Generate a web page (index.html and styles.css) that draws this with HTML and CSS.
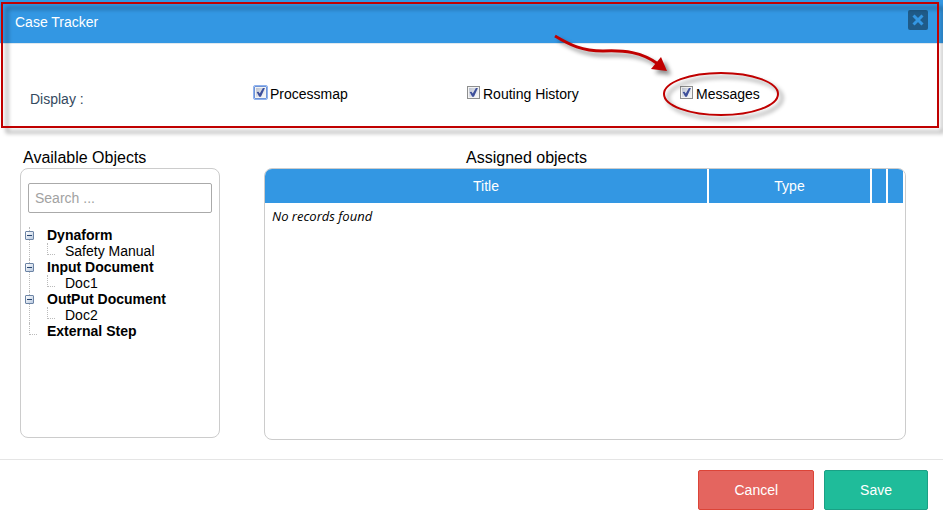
FILE: index.html
```html
<!DOCTYPE html>
<html lang="en">
<head>
<meta charset="utf-8">
<title>Case Tracker</title>
<link rel="stylesheet" href="styles.css">
</head>
<body>
<main class="dialog">
  <div class="top">
    <header class="titlebar">
      <h1>Case Tracker</h1>
      <button class="close" type="button" aria-label="Close">
        <svg viewBox="0 0 20 20" width="20" height="20"><path d="M5.5 5.5l9 9M14.5 5.5l-9 9" stroke="#3397e3" stroke-width="3"/></svg>
      </button>
    </header>
    <div class="display" role="group" aria-labelledby="display-label">
      <span id="display-label" class="display-label">Display :</span>
      <div class="option"><input class="focused" type="checkbox" id="processmap" checked><label for="processmap">Processmap</label></div>
      <div class="option"><input type="checkbox" id="routing" checked><label for="routing">Routing History</label></div>
      <div class="option">
        <input type="checkbox" id="messages" checked><label for="messages">Messages</label>
        <svg class="callout" viewBox="0 0 260 100" width="260" height="100" aria-hidden="true">
          <ellipse cx="171" cy="64" rx="57" ry="21" fill="none" stroke="#c00000" stroke-width="2"/>
          <path d="M5 6C20 15 32 21 53 21C74 20 92 22 108 34" fill="none" stroke="#c00000" stroke-width="3"/>
          <path d="M117 41L101 39L111 27Z" fill="#c00000"/>
        </svg>
      </div>
    </div>
    <div class="highlight" aria-hidden="true"></div>
  </div>
  <div class="content">
    <section class="available">
      <h2>Available Objects</h2>
      <div class="panel tree-panel">
        <input class="search" type="text" placeholder="Search ..." aria-label="Search objects">
        <ul class="tree">
          <li><button class="toggle" type="button" aria-label="Collapse Dynaform"></button><b>Dynaform</b>
            <ul><li>Safety Manual</li></ul></li>
          <li><button class="toggle" type="button" aria-label="Collapse Input Document"></button><b>Input Document</b>
            <ul><li>Doc1</li></ul></li>
          <li><button class="toggle" type="button" aria-label="Collapse OutPut Document"></button><b>OutPut Document</b>
            <ul><li>Doc2</li></ul></li>
          <li><b>External Step</b></li>
        </ul>
      </div>
    </section>
    <section class="assigned">
      <h2>Assigned objects</h2>
      <div class="panel table-panel">
        <table>
          <thead><tr><th>Title</th><th class="type">Type</th><th class="action"></th><th class="action last"></th></tr></thead>
          <tbody><tr><td colspan="4">No records found</td></tr></tbody>
        </table>
      </div>
    </section>
  </div>
  <footer class="footer">
    <button class="btn cancel" type="button">Cancel</button>
    <button class="btn save" type="button">Save</button>
  </footer>
</main>
</body>
</html>
```
FILE: styles.css
```css
* { box-sizing: border-box; }
body {
  margin: 0;
  background: #fff;
  color: #000;
  font: 14px/16px "Liberation Sans", Arial, sans-serif;
}
h1, h2 { margin: 0; font-weight: normal; }
button, input { font: inherit; }

.top { position: relative; height: 129px; }
.titlebar {
  display: flex;
  align-items: flex-start;
  justify-content: space-between;
  height: 44px;
  padding: 10px 15px;
  background: #3397e3;
  border-bottom: 1px solid #dfe8ee;
}
.titlebar h1 { padding-top: 4px; font-size: 14px; line-height: 16px; color: #fff; }
.close {
  width: 20px;
  height: 20px;
  padding: 0;
  border: 0;
  border-radius: 2px;
  background: #1f5b88;
}
.close svg { display: block; }

.display {
  display: grid;
  grid-template-columns: 224px repeat(3, 1fr);
  padding: 42px 50px 0 30px;
}
.display-label { padding-top: 5px; color: #34495e; }
.option { position: relative; display: flex; align-items: flex-start; gap: 3px; }
.option input {
  appearance: none;
  width: 13px;
  height: 13px;
  margin: 0;
  border: 1px solid #8e8f8f;
  background: linear-gradient(135deg, #b5bccb, #f4f5f7 80%);
  box-shadow: inset 0 0 0 1px #f4f4f4;
}
.option input.focused { border-color: #6d93d8; outline: 1px solid #8fb2ee; border-radius: 1px; }
.option input:checked::before {
  content: "";
  display: block;
  width: 11px;
  height: 11px;
  background: #3e509b;
  clip-path: polygon(15% 45%, 32% 43%, 43% 60%, 72% 9%, 90% 9%, 54% 88%, 38% 88%);
}
.callout {
  position: absolute;
  left: -130px;
  top: -56px;
  pointer-events: none;
  filter: drop-shadow(4px 4px 2px rgba(0, 0, 0, 0.45));
}
.highlight {
  position: absolute;
  inset: 2px 4px 1px 1px;
  border: 2px solid #c00000;
  pointer-events: none;
  filter: drop-shadow(5px 5px 2px rgba(0, 0, 0, 0.42));
}

.content { display: flex; gap: 44px; padding: 19px 37px 19px 20px; }
.content h2 { font-size: 16px; line-height: 20px; }
.available { width: 200px; }
.available h2 { padding-left: 3px; }
.assigned { flex: 1; }
.assigned h2 { padding-left: 202px; }
.panel { border: 1px solid #ccc; border-radius: 8px; }
.tree-panel { min-height: 270px; padding: 14px 7px; }
.search {
  display: block;
  width: 100%;
  height: 30px;
  padding: 0 6px;
  border: 1px solid #aaa;
  border-radius: 2px;
  background: #fff;
}
.search::placeholder { color: #a2a2a2; opacity: 1; }
.tree, .tree ul { margin: 0; padding: 0; list-style: none; }
.tree { margin-top: 14px; }
.tree li { position: relative; padding-left: 19px; }
.tree ul li { padding-left: 18px; }
.tree li::before {
  content: "";
  position: absolute;
  left: 1px;
  top: 0;
  bottom: 0;
  border-left: 1px dotted #bbb;
}
.tree > li:last-child::before, .tree ul li::before {
  width: 7px;
  height: 11px;
  border-bottom: 1px dotted #bbb;
}
.tree ul li::before { left: 0; }
.toggle {
  position: absolute;
  left: -3px;
  top: 4px;
  width: 9px;
  height: 9px;
  padding: 0;
  border: 1px solid #6c84a5;
  border-radius: 1px;
  background: linear-gradient(#27456f, #27456f) center / 5px 1px no-repeat, linear-gradient(135deg, #fff, #b9c9df);
}

.table-panel { min-height: 272px; overflow: hidden; }
table { width: 100%; border-collapse: separate; border-spacing: 0; table-layout: fixed; }
th {
  height: 34px;
  padding: 0;
  border-right: 2px solid #fff;
  background: #3397e3;
  background-clip: padding-box;
  color: #fff;
  font-weight: normal;
}
.type { width: 163px; }
.action { width: 16px; }
.action.last { width: 17px; }
td { padding: 5px 7px; font: italic 13px/16px "Open Sans", sans-serif; }

.footer {
  display: flex;
  justify-content: flex-end;
  gap: 10px;
  padding: 10px 15px;
  border-top: 1px solid #e5e5e5;
}
.btn { height: 40px; padding: 0 35px; border: 1px solid; border-radius: 2px; color: #fff; }
.cancel { background: #e4655f; border-color: #dc4437; }
.save { background: #1fbc9a; border-color: #1ba085; }
```
